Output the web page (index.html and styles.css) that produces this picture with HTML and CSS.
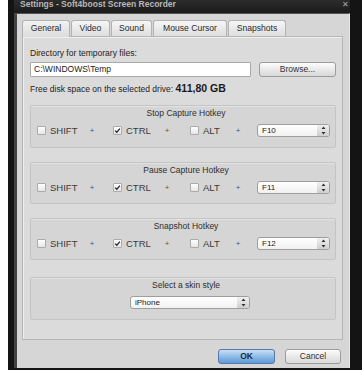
FILE: index.html
```html
<!DOCTYPE html>
<html>
<head>
<meta charset="utf-8">
<link rel="stylesheet" href="styles.css">
</head>
<body>
<div class="window">
  <div class="titlebar">
    <span class="title">Settings - Soft4boost Screen Recorder</span>
    <span class="close">✕</span>
  </div>
  <div class="client">
    <div class="tabs">
      <div class="tab active w-general">General</div>
      <div class="tab w-video">Video</div>
      <div class="tab w-sound">Sound</div>
      <div class="tab w-mouse">Mouse Cursor</div>
      <div class="tab w-snap">Snapshots</div>
    </div>
    <div class="panel">
      <div class="label">Directory for temporary files:</div>
      <div class="dir-row">
        <div class="input">C:\WINDOWS\Temp</div>
        <div class="btn browse">Browse...</div>
      </div>
      <div class="free">Free disk space on the selected drive: <b>411,80 GB</b></div>

      <div class="group">
        <div class="gtitle">Stop Capture Hotkey</div>
        <div class="keys">
          <div class="chk"><span class="box"></span><span>SHIFT</span></div>
          <div class="plus">+</div>
          <div class="chk"><span class="box checked"><svg viewBox="0 0 9 9" width="9" height="9"><path d="M2.2 4.6 L3.8 6.3 L6.8 2.6" fill="none" stroke="#222" stroke-width="1.3"/></svg></span><span>CTRL</span></div>
          <div class="plus">+</div>
          <div class="chk"><span class="box"></span><span>ALT</span></div>
          <div class="plus">+</div>
          <div class="select"><span class="val">F10</span><span class="spin"><svg viewBox="0 0 5 9" width="5" height="9"><path d="M2.5 0.5 L4.5 3 L0.5 3 Z M0.5 6 L4.5 6 L2.5 8.5 Z" fill="#333"/></svg></span></div>
        </div>
      </div>

      <div class="group">
        <div class="gtitle">Pause Capture Hotkey</div>
        <div class="keys">
          <div class="chk"><span class="box"></span><span>SHIFT</span></div>
          <div class="plus">+</div>
          <div class="chk"><span class="box checked"><svg viewBox="0 0 9 9" width="9" height="9"><path d="M2.2 4.6 L3.8 6.3 L6.8 2.6" fill="none" stroke="#222" stroke-width="1.3"/></svg></span><span>CTRL</span></div>
          <div class="plus">+</div>
          <div class="chk"><span class="box"></span><span>ALT</span></div>
          <div class="plus">+</div>
          <div class="select"><span class="val">F11</span><span class="spin"><svg viewBox="0 0 5 9" width="5" height="9"><path d="M2.5 0.5 L4.5 3 L0.5 3 Z M0.5 6 L4.5 6 L2.5 8.5 Z" fill="#333"/></svg></span></div>
        </div>
      </div>

      <div class="group">
        <div class="gtitle">Snapshot Hotkey</div>
        <div class="keys">
          <div class="chk"><span class="box"></span><span>SHIFT</span></div>
          <div class="plus">+</div>
          <div class="chk"><span class="box checked"><svg viewBox="0 0 9 9" width="9" height="9"><path d="M2.2 4.6 L3.8 6.3 L6.8 2.6" fill="none" stroke="#222" stroke-width="1.3"/></svg></span><span>CTRL</span></div>
          <div class="plus">+</div>
          <div class="chk"><span class="box"></span><span>ALT</span></div>
          <div class="plus">+</div>
          <div class="select"><span class="val">F12</span><span class="spin"><svg viewBox="0 0 5 9" width="5" height="9"><path d="M2.5 0.5 L4.5 3 L0.5 3 Z M0.5 6 L4.5 6 L2.5 8.5 Z" fill="#333"/></svg></span></div>
        </div>
      </div>

      <div class="group skin">
        <div class="gtitle">Select a skin style</div>
        <div class="skin-row">
          <div class="select skin-select"><span class="val">iPhone</span><span class="spin"><svg viewBox="0 0 5 9" width="5" height="9"><path d="M2.5 0.5 L4.5 3 L0.5 3 Z M0.5 6 L4.5 6 L2.5 8.5 Z" fill="#333"/></svg></span></div>
        </div>
      </div>
    </div>
    <div class="actions">
      <div class="btn ok">OK</div>
      <div class="btn cancel">Cancel</div>
    </div>
  </div>
</div>
</body>
</html>
```

FILE: styles.css
```css
html, body {
  margin: 0;
  padding: 0;
}
body {
  background: #ffffff;
  width: 362px;
  height: 373px;
  overflow: hidden;
  font-family: "Liberation Sans", Arial, sans-serif;
  font-size: 8.5px;
  color: #222;
}
.window {
  margin-left: 8px;
  width: 354px;
  height: 370px;
  box-sizing: border-box;
  background: #141414;
  padding: 0 12px 2px 6px;
  display: flex;
  flex-direction: column;
}
.titlebar {
  height: 13px;
  flex: none;
  display: flex;
  align-items: flex-start;
  justify-content: space-between;
  padding-left: 6px;
  padding-right: 1px;
  background: linear-gradient(#2c2c2c, #1b1b1b);
}
.title {
  font-weight: bold;
  font-size: 8.5px;
  line-height: 9px;
  color: #b8b8b8;
}
.close {
  font-size: 8px;
  line-height: 9px;
  color: #a8a8a8;
}
.client {
  flex: 1;
  background: #d6d6d6;
  border-left: 3px solid #434343;
  border-right: 1px solid #e6e6e6;
  border-top: 1px solid #555;
  padding: 6px 3px 0 5px;
  display: flex;
  flex-direction: column;
}
.tabs {
  display: flex;
  align-items: flex-end;
  gap: 1px;
  height: 16px;
  flex: none;
}
.tab {
  height: 16px;
  box-sizing: border-box;
  border: 1px solid #b3b3b3;
  border-bottom: none;
  border-radius: 3px 3px 0 0;
  background: linear-gradient(#f6f6f6, #dedede);
  font-size: 8.6px;
  line-height: 15px;
  text-align: center;
  color: #2a2a2a;
}
.tab.active {
  height: 17px;
  margin-bottom: -1px;
  background: linear-gradient(#f2f2f2, #dcdcdc);
  z-index: 2;
}
.w-general { width: 48px; }
.w-video { width: 39px; }
.w-sound { width: 41px; }
.w-mouse { width: 74px; }
.w-snap { width: 58px; }
.panel {
  width: 321px;
  height: 304px;
  box-sizing: border-box;
  flex: none;
  background: #dbdbdb;
  border: 1px solid #b6b6b6;
  box-shadow: inset 1px 1px 0 #eeeeee;
  padding: 11px 6px 0 7px;
  display: flex;
  flex-direction: column;
}
.label {
  line-height: 11px;
  height: 11px;
}
.dir-row {
  margin-top: 3px;
  display: flex;
  justify-content: space-between;
  height: 15px;
}
.input {
  width: 221px;
  height: 15px;
  box-sizing: border-box;
  background: #ffffff;
  border: 1px solid #a9a9a9;
  border-radius: 1px;
  padding-left: 3px;
  line-height: 13px;
}
.btn {
  box-sizing: border-box;
  border: 1px solid #9c9c9c;
  border-radius: 3px;
  background: linear-gradient(#fdfdfd, #e9e9e9 50%, #d9d9d9);
  text-align: center;
  color: #333;
}
.browse {
  width: 77px;
  height: 15px;
  line-height: 13px;
}
.free {
  margin-top: 5px;
  line-height: 12px;
  height: 12px;
}
.free b {
  font-size: 10.5px;
  color: #1a1a1a;
}
.group {
  margin-top: 11px;
  height: 43px;
  box-sizing: border-box;
  border: 1px solid #c4c4c4;
  border-radius: 2px;
  background: #d5d5d5;
  box-shadow: inset 0 1px 0 #e2e2e2;
  padding: 2px 6px 0 6px;
  flex: none;
}
.group + .group {
  margin-top: 14px;
  height: 42px;
}
.group.skin {
  margin-top: 17px;
  height: 43px;
}
.gtitle {
  text-align: center;
  line-height: 11px;
  height: 11px;
  color: #2e2e2e;
  padding-left: 6px;
}
.keys {
  margin-top: 5px;
  display: grid;
  grid-template-columns: 34px 42px 31px 46px 29px 38px 73px;
  align-items: center;
  height: 13px;
  font-size: 9.5px;
  color: #3a3a3a;
}
.chk {
  display: flex;
  align-items: center;
  gap: 4px;
  white-space: nowrap;
}
.box {
  width: 9px;
  height: 9px;
  box-sizing: border-box;
  border: 1px solid #ababab;
  border-radius: 1px;
  background: linear-gradient(#ffffff, #e6e6e6);
  display: flex;
  align-items: center;
  justify-content: center;
  flex: none;
}
.box svg {
  display: block;
  flex: none;
}
.plus {
  text-align: center;
  font-size: 8px;
  color: #555;
}
.select {
  width: 73px;
  height: 13px;
  box-sizing: border-box;
  border: 1px solid #9e9e9e;
  border-radius: 3px;
  background: linear-gradient(#ffffff, #f1f1f1);
  display: flex;
  align-items: center;
  justify-content: space-between;
  font-size: 8px;
  color: #222;
  overflow: hidden;
}
.val {
  padding-left: 4px;
}
.spin {
  width: 12px;
  height: 11px;
  background: linear-gradient(#f0f0f0, #cfcfcf);
  display: flex;
  align-items: center;
  justify-content: center;
}
.spin svg {
  display: block;
}
.skin-row {
  margin-top: 5px;
  display: flex;
  justify-content: flex-start;
  padding-left: 93px;
}
.skin-select {
  width: 120px;
}
.actions {
  margin-top: 9px;
  display: flex;
  justify-content: flex-end;
  gap: 10px;
  padding-right: 5px;
}
.ok {
  width: 57px;
  height: 15px;
  line-height: 13px;
  border-color: #5878a8;
  background: linear-gradient(#c9e0f7, #8fbbe8 50%, #5d9ad8);
  font-weight: bold;
  color: #1d2a3a;
}
.cancel {
  width: 56px;
  height: 15px;
  line-height: 13px;
}
```
